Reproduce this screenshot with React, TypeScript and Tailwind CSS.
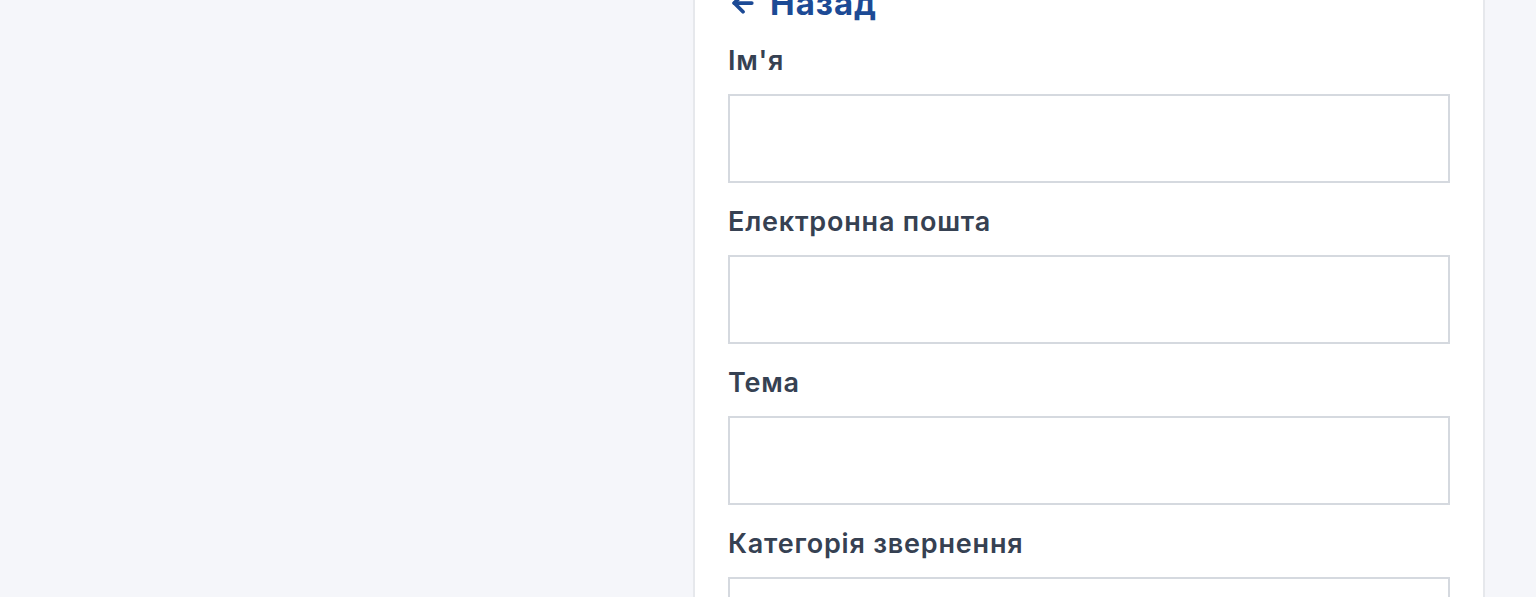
import { ArrowLeft } from "lucide-react"

const fields = ["Ім'я", "Електронна пошта", "Тема", "Категорія звернення"]

function Field({ label }: { label: string }) {
  return (
    <div className="flex flex-col">
      <label className="h-9 mb-[15px] text-[27px] leading-9 font-semibold tracking-[0.8px] text-[#364152]">
        {label}
      </label>
      <input
        type="text"
        className="h-[89px] w-full border-2 border-[#d5d9df] bg-white px-4 outline-none"
      />
    </div>
  )
}

export default function App() {
  return (
    <div
      className="h-[597px] overflow-hidden bg-[#f5f6fa] flex justify-end pr-[51px]"
      style={{ fontFamily: "Inter, 'Noto Sans', sans-serif" }}
    >
      <div className="w-[792px] bg-white border-x-2 border-[#e6e8ec] px-[33px] -mt-[17px]">
        <a href="#" className="flex items-center gap-3 h-10 text-[33px] leading-10 font-bold tracking-[1px] text-[#1c4a95]">
          <ArrowLeft className="w-[30px] h-[30px]" strokeWidth={3} />
          Назад
        </a>
        <div className="mt-5 flex flex-col gap-[21px]">
          {fields.map((f) => (
            <Field key={f} label={f} />
          ))}
        </div>
      </div>
    </div>
  )
}
